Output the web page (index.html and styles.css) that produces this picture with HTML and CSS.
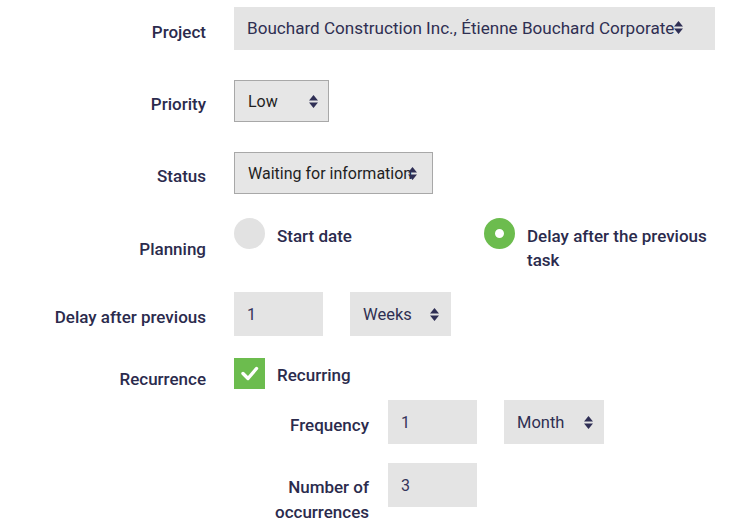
FILE: index.html
```html
<!DOCTYPE html>
<html lang="en">
<head>
<meta charset="utf-8">
<title>Task form</title>
<link rel="stylesheet" href="styles.css">
</head>
<body>
<form class="form">
  <div class="row row-project">
    <div class="label">Project</div>
    <div class="control">
      <div class="select select-project">
        <span class="select-text">Bouchard Construction Inc., Étienne Bouchard Corporate</span>
        <svg class="arrow" width="9" height="13" viewBox="0 0 9 13"><path d="M0 5.5L4.5 0L9 5.5Z M0 7.5H9L4.5 13Z"/></svg>
      </div>
    </div>
  </div>

  <div class="row row-priority">
    <div class="label">Priority</div>
    <div class="control">
      <div class="select select-bordered select-priority">
        <span class="select-text">Low</span>
        <svg class="arrow" width="9" height="13" viewBox="0 0 9 13"><path d="M0 5.5L4.5 0L9 5.5Z M0 7.5H9L4.5 13Z"/></svg>
      </div>
    </div>
  </div>

  <div class="row row-status">
    <div class="label">Status</div>
    <div class="control">
      <div class="select select-bordered select-status">
        <span class="select-text">Waiting for information</span>
        <svg class="arrow" width="9" height="13" viewBox="0 0 9 13"><path d="M0 5.5L4.5 0L9 5.5Z M0 7.5H9L4.5 13Z"/></svg>
      </div>
    </div>
  </div>

  <div class="row row-planning">
    <div class="label label-planning">Planning</div>
    <div class="control radio-group">
      <div class="option">
        <span class="radio"></span>
        <span class="option-text">Start date</span>
      </div>
      <div class="option">
        <span class="radio radio-checked"></span>
        <span class="option-text">Delay after the previous task</span>
      </div>
    </div>
  </div>

  <div class="row row-delay">
    <div class="label">Delay after previous</div>
    <div class="control inline">
      <div class="input">1</div>
      <div class="select select-weeks">
        <span class="select-text">Weeks</span>
        <svg class="arrow" width="9" height="13" viewBox="0 0 9 13"><path d="M0 5.5L4.5 0L9 5.5Z M0 7.5H9L4.5 13Z"/></svg>
      </div>
    </div>
  </div>

  <div class="row row-recurrence">
    <div class="label label-recurrence">Recurrence</div>
    <div class="control">
      <div class="option option-check">
        <span class="checkbox">
          <svg width="31" height="31" viewBox="0 0 31 31"><path d="M9 15.5L14 20.5L22.5 10.5" fill="none" stroke="#fff" stroke-width="3.4" stroke-linecap="round" stroke-linejoin="round"/></svg>
        </span>
        <span class="option-text">Recurring</span>
      </div>
      <div class="sub-row sub-frequency">
        <div class="label">Frequency</div>
        <div class="inline">
          <div class="input">1</div>
          <div class="select select-month">
            <span class="select-text">Month</span>
            <svg class="arrow" width="9" height="13" viewBox="0 0 9 13"><path d="M0 5.5L4.5 0L9 5.5Z M0 7.5H9L4.5 13Z"/></svg>
          </div>
        </div>
      </div>
      <div class="sub-row sub-occurrences">
        <div class="label label-occurrences">Number of occurrences</div>
        <div class="inline">
          <div class="input">3</div>
        </div>
      </div>
    </div>
  </div>
</form>
</body>
</html>
```

FILE: styles.css
```css
html, body {
  margin: 0;
  padding: 0;
  background: #ffffff;
}

body {
  font-family: Roboto, "Liberation Sans", sans-serif;
  font-size: 17px;
  color: #2b2b4d;
}

.form {
  padding-top: 7px;
  width: 730px;
}

.row {
  display: grid;
  grid-template-columns: 206px 481px;
  column-gap: 28px;
  align-items: center;
}

.label {
  text-align: right;
  font-weight: 500;
  font-size: 17px;
  line-height: 24px;
  padding-top: 6px;
  color: #2b2b4d;
}

.row-priority { margin-top: 30px; }
.row-status { margin-top: 30px; }
.row-planning { margin-top: 24px; align-items: start; }
.row-delay { margin-top: 20px; }
.row-recurrence { margin-top: 22px; align-items: start; }

.label-planning { padding-top: 19px; }
.label-recurrence { padding-top: 9px; }

.select {
  display: flex;
  align-items: center;
  box-sizing: border-box;
  background: #e4e4e4;
  padding: 0 11px 0 13px;
  color: #2f2f52;
  font-size: 17px;
  white-space: nowrap;
}

.select-text {
  flex: 0 1 auto;
  overflow: visible;
}

.arrow {
  flex: none;
  margin-left: auto;
  fill: #2f2f55;
}

.select-project {
  height: 43px;
  width: 481px;
  padding-left: 13px;
  padding-bottom: 2px;
  font-size: 17.1px;
}

.select-project .arrow {
  margin-left: 0;
}

.select-bordered {
  border: 1px solid #a8a8a8;
  background: #e6e6e6;
  color: #1f1f1f;
  height: 42px;
  font-size: 16px;
}

.select-priority {
  width: 95px;
  padding-right: 10px;
}

.select-status {
  width: 199px;
  padding-right: 15px;
}

.select-status .select-text {
  margin-right: -6px;
}

.inline {
  display: flex;
  align-items: center;
  gap: 27px;
}

.input {
  box-sizing: border-box;
  width: 89px;
  height: 44px;
  background: #e4e4e4;
  padding-left: 13px;
  display: flex;
  align-items: center;
  color: #34345a;
  font-size: 16px;
}

.select-weeks {
  width: 101px;
  height: 44px;
  padding-right: 12px;
  font-size: 16.5px;
}

.select-month {
  width: 100px;
  height: 44px;
  padding-right: 11px;
  font-size: 16.5px;
}

.radio-group {
  display: grid;
  grid-template-columns: 250px 231px;
}

.option {
  display: flex;
  align-items: flex-start;
  gap: 12px;
}

.option-text {
  font-weight: 500;
  font-size: 17px;
  line-height: 24px;
  padding-top: 6px;
  color: #2b2b4d;
}

.radio {
  flex: none;
  width: 31px;
  height: 31px;
  border-radius: 50%;
  background: #e2e2e2;
  box-sizing: border-box;
}

.radio-checked {
  background: #ffffff;
  border: 11px solid #6cbc4e;
}

.checkbox {
  flex: none;
  width: 31px;
  height: 31px;
  background: #6cbc4e;
  display: block;
}

.checkbox svg {
  display: block;
}

.option-check .option-text {
  padding-top: 5px;
}

.sub-row {
  display: grid;
  grid-template-columns: 135px auto;
  column-gap: 19px;
  align-items: center;
}

.sub-frequency { margin-top: 11px; }
.sub-occurrences { margin-top: 19px; align-items: start; }

.label-occurrences {
  line-height: 25px;
  padding-top: 12px;
}
```
